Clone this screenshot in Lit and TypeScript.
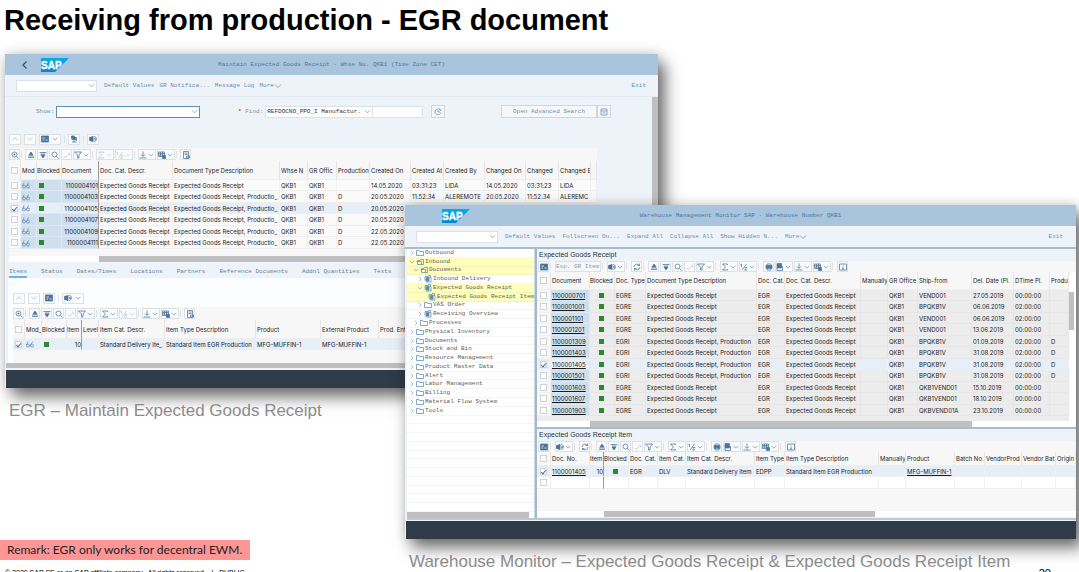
import { LitElement, html, svg, css, nothing, TemplateResult } from "lit";
import { customElement, property } from "lit/decorators.js";
import { classMap } from "lit/directives/class-map.js";
import { styleMap } from "lit/directives/style-map.js";

const glyphs: Record<string, unknown> = {
  chevron: svg`<path d="M2 5l6 6 6-6"/>`,
  next: svg`<path d="M5 2l6 6-6 6"/>`,
  back: svg`<path d="M11 1L4 8l7 7" stroke-width="2.4"/>`,
  up: svg`<path d="M3 11l5-6 5 6"/>`,
  down: svg`<path d="M3 5l5 6 5-6"/>`,
  form: svg`<path class="f" d="M1 2h14v12H1z"/><path stroke="#fff" d="M3 6h5M3 10h3M9 10h4"/>`,
  scan: svg`<path class="f" d="M3 2h6v5H3zM7 5h6v4H7z"/><path d="M8 9v5M4 14h9M3 9h3M11 11h3"/>`,
  receipt: svg`<path class="f" d="M1 5l7-2v10l-7-2z"/><path d="M9 4c4-3 6 2 6 4s-2 6-6 4M10 8h4M12 6v4"/>`,
  zoomin: svg`<circle cx="7" cy="7" r="5"/><path d="M11 11l4 4M5 7h4M7 5v4"/>`,
  asc: svg`<path class="f" d="M8 2l4 6H4z"/><path d="M2 10h12M2 13h12"/>`,
  desc: svg`<path d="M1 3h14M3 6h10"/><path class="f" d="M4 8h8l-4 6z"/>`,
  search: svg`<circle cx="7" cy="7" r="5"/><path d="M11 11l4 4"/>`,
  searchnext: svg`<path d="M2 10l3 3 5-6M12 3v4h3"/>`,
  funnel: svg`<path d="M1 2h14l-5 6v6H7V8z"/>`,
  sum: svg`<path d="M13 4V2H3l6 6-6 6h10v-2"/>`,
  subtotal: svg`<path d="M3 2v6M1 3l2-1M13 2L4 14M9 9h5l-5 5h5"/>`,
  download: svg`<path d="M8 1v9M4 7l4 4 4-4M1 14h14"/>`,
  layout: svg`<path d="M1 2h12v9H1zM1 5h12M5 2v9M9 2v9M1 8h12"/><path class="f" d="M9 9h6v6H9z"/>`,
  doc: svg`<path d="M3 1h10v14H3zM5 4h6M5 7h6M9 10h6v4H9z"/>`,
  refresh: svg`<path d="M2 8a6 6 0 0 1 11-3M14 8a6 6 0 0 1-11 3M13 1v4H9M3 15v-4h4"/>`,
  print: svg`<path d="M4 5V2h8v3M2 5h12v6H2zM4 9h8v5H4z"/><path class="f" d="M3 6h10v3H3z"/>`,
  view: svg`<path class="f" d="M2 1h9v9H2z"/><path d="M4 3h5M2 10v5h11V6"/>`,
  info: svg`<path d="M1 2h14v12H1zM8 7v5M8 4v1M6 12h4"/>`,
  clock: svg`<path d="M14 9a6 6 0 1 1-2-6M8 4v4h4M12 1v4h3"/>`,
  collapse: svg`<path d="M2 2h12v12H2zM2 6h12M5 10h6"/>`,
  glasses: svg`<circle cx="4" cy="11" r="3"/><circle cx="12" cy="11" r="3"/><path d="M7 11h2M1 11l3-8M9 11l4-8"/>`,
  folder: svg`<path d="M1 13V3h5l1 2h8v8z"/>`,
  open: svg`<path d="M3 13V5h5l1-2h6v10zM1 7h10v6"/>`,
  stack: svg`<path d="M4 14V5h10v9zM2 11V3h7V1h4v4"/><path class="f" d="M5 6h5v6H5z"/>`,
};

const icon = (name: string) =>
  html`<svg class="icon" viewBox="0 0 16 16" aria-hidden="true">${glyphs[name]}</svg>`;

type Tool = string;

/* "name" is a push button, "name+" opens a menu, "|" separates, a leading "-" disables */
const tool = (t: Tool) => {
  if (t === "|") return html`<span class="sep"></span>`;
  if (t.startsWith("=")) return html`<button class="word">${t.slice(1)}</button>`;
  const off = t.startsWith("-");
  const menu = t.endsWith("+");
  const name = t.replace(/[-+]/g, "");
  return html`<button class=${classMap({ tool: true, menu, off })} ?disabled=${off} aria-label=${name}>
    ${icon(name)}${menu ? html`<span class="drop">${icon("chevron")}</span>` : nothing}
  </button>`;
};

interface Col {
  t: string;
  w?: number;
  kind?: "check" | "mode" | "led" | "num" | "key" | "link";
  pin?: boolean;
  edge?: boolean;
}

const cell = (c: Col, v: string): unknown => {
  switch (c.kind) {
    case "check":
      return html`<input type="checkbox" aria-label="Select row" ?checked=${v === "x"} />`;
    case "mode":
      return v ? icon("glasses") : nothing;
    case "led":
      return v ? html`<i class="led"></i>` : nothing;
    case "key":
    case "link":
      return v ? html`<a href="#">${v}</a>` : nothing;
    default:
      return v;
  }
};

const grid = (cols: Col[], rows: string[][], name: string): TemplateResult => html`
  <table aria-label=${name}>
    <colgroup>
      ${cols.map((c) => html`<col style=${styleMap(c.w ? { width: `${c.w}px` } : {})} />`)}
    </colgroup>
    <thead>
      <tr>
        ${cols.map(
          (c) => html`<th class=${classMap({ edge: !!c.edge, [c.kind ?? "text"]: true })}>
            ${c.kind === "check" ? html`<input type="checkbox" aria-label="Select all" />` : c.t}
          </th>`
        )}
      </tr>
    </thead>
    <tbody>
      ${rows.map(
        (r) => html`<tr class=${classMap({ on: r[0] === "x" })}>
          ${cols.map(
            (c, i) => html`<td class=${classMap({ pin: !!c.pin, edge: !!c.edge, [c.kind ?? "text"]: true })}>
              ${cell(c, r[i] ?? "")}
            </td>`
          )}
        </tr>`
      )}
    </tbody>
  </table>
`;

const combo = (cls: string, label: string, value = "") => html`
  <span class="combo ${cls}">
    <select aria-label=${label} id=${cls}><option>${value}</option></select>
    ${icon("chevron")}
  </span>
`;

const EGR = "Expected Goods Receipt";
const PROD = "Expected Goods Receipt, Productio_";

const docCols: Col[] = [
  { t: "", w: 12, kind: "check" },
  { t: "Mod", w: 16, kind: "mode", pin: true },
  { t: "Blocked", w: 25, kind: "led", pin: true },
  { t: "Document", w: 37, kind: "num", pin: true, edge: true },
  { t: "Doc. Cat. Descr.", w: 74 },
  { t: "Document Type Description", w: 107 },
  { t: "Whse N", w: 28 },
  { t: "GR Offic", w: 29 },
  { t: "Production", w: 33 },
  { t: "Created On", w: 41 },
  { t: "Created At", w: 33 },
  { t: "Created By", w: 41 },
  { t: "Changed On", w: 41 },
  { t: "Changed", w: 33 },
  { t: "Changed E", w: 32 },
  { t: "" },
];

const docRows: string[][] = [
  ["1100004101", EGR, "", "14.05.2020", "03:31:23", "LIDA", "14.05.2020", "LIDA"],
  ["1100004103", PROD, "D", "20.05.2020", "11:52:34", "ALEREMOTE", "20.05.2020", "ALEREMC"],
  ["1100004105", PROD, "D", "20.05.2020", "", "", "", ""],
  ["1100004107", PROD, "D", "20.05.2020", "", "", "", ""],
  ["1100004109", PROD, "D", "22.05.2020", "", "", "", ""],
  ["1100004111", PROD, "D", "22.05.2020", "", "", "", ""],
].map(([doc, type, d, on, at, by, changed, changer], i) => [
  i === 2 ? "x" : "", "1", "1", doc, EGR, type, "QKB1", "QKB1", d, on, at, by, changed, at, changer,
]);

const itemCols: Col[] = [
  { t: "", w: 12, kind: "check" },
  { t: "Mod_", w: 17, kind: "mode" },
  { t: "Blocked", w: 25, kind: "led" },
  { t: "Item", w: 15, kind: "num", edge: true },
  { t: "Level", w: 17 },
  { t: "Item Cat. Descr.", w: 66 },
  { t: "Item Type Description", w: 91 },
  { t: "Product", w: 65 },
  { t: "External Product", w: 58 },
  { t: "Prod. Entry" },
];

const monCols: Col[] = [
  { t: "", w: 14, kind: "check" },
  { t: "Document", w: 39, kind: "key", pin: true },
  { t: "Blocked", w: 25, kind: "led" },
  { t: "Doc. Type", w: 31 },
  { t: "Document Type Description", w: 111 },
  { t: "Doc. Cat.", w: 28 },
  { t: "Doc. Cat. Descr.", w: 76 },
  { t: "Manually", w: 27 },
  { t: "GR Office", w: 30 },
  { t: "Ship-from", w: 54 },
  { t: "Del. Date (Pl.", w: 42 },
  { t: "DTime Pl.", w: 36 },
  { t: "Produ" },
];

const monRows: string[][] = [
  ["1100000701", "EGRE", "VEND001", "27.05.2019", "00:00:00"],
  ["1100001001", "EGRE", "BPQKB1V", "06.06.2019", "02:00:00"],
  ["1100001101", "EGRE", "VEND001", "06.06.2019", "02:00:00"],
  ["1100001201", "EGRE", "VEND001", "13.06.2019", "00:00:00"],
  ["1100001309", "EGRI", "BPQKB1V", "01.09.2019", "02:00:00"],
  ["1100001403", "EGRI", "BPQKB1V", "31.08.2019", "02:00:00"],
  ["1100001405", "EGRI", "BPQKB1V", "31.08.2019", "02:00:00"],
  ["1100001501", "EGRI", "BPQKB1V", "31.08.2019", "02:00:00"],
  ["1100001603", "EGRE", "QKB1VEND01", "15.10.2019", "00:00:00"],
  ["1100001607", "EGRE", "QKB1VEND01", "18.10.2019", "00:00:00"],
  ["1100001903", "EGRE", "QKBVEND01A", "23.10.2019", "00:00:00"],
].map(([doc, type, from, date, time]) => [
  doc === "1100001405" ? "x" : "", doc, "1", type,
  type === "EGRI" ? `${EGR}, Production` : EGR,
  "EGR", EGR, "", "QKB1", from, date, time, type === "EGRI" ? "D" : "",
]);

const monItemCols: Col[] = [
  { t: "", w: 14, kind: "check" },
  { t: "Doc. No.", w: 39, kind: "key" },
  { t: "Item", w: 14, kind: "num", edge: true },
  { t: "Blocked", w: 25, kind: "led" },
  { t: "Doc. Cat.", w: 29 },
  { t: "Item Cat.", w: 28 },
  { t: "Item Cat. Descr.", w: 69 },
  { t: "Item Type", w: 30 },
  { t: "Item Type Description", w: 94 },
  { t: "Manually", w: 27 },
  { t: "Product", w: 49, kind: "link" },
  { t: "Batch No.", w: 30 },
  { t: "VendorProd", w: 37 },
  { t: "Vendor Bat", w: 34 },
  { t: "Origin" },
];

/* [level, state, icon, label, highlighted] */
const tree: [number, string, string, string, boolean?][] = [
  [0, "next", "folder", "Outbound"],
  [0, "chevron", "open", "Inbound", true],
  [1, "chevron", "open", "Documents", true],
  [2, "next", "stack", "Inbound Delivery"],
  [2, "chevron", "stack", "Expected Goods Receipt", true],
  [3, "", "stack", "Expected Goods Receipt Item", true],
  [2, "next", "folder", "VAS Order"],
  [2, "next", "stack", "Receiving Overview"],
  [1, "next", "folder", "Processes"],
  ...[
    "Physical Inventory", "Documents", "Stock and Bin", "Resource Management",
    "Product Master Data", "Alert", "Labor Management", "Billing",
    "Material Flow System", "Tools",
  ].map((n): [number, string, string, string] => [0, "next", "folder", n]),
];

const shared = css`
  :host { display: block; }
  * { box-sizing: border-box; }
  .icon {
    width: 8px; height: 8px; display: block; flex: none;
    fill: none; stroke: currentColor; stroke-width: 1.5;
  }
  .icon .f { fill: currentColor; }
  button, select, input {
    font: inherit; color: inherit; margin: 0; padding: 0;
    border: 0; border-radius: 0; background: none;
  }
`;

@customElement("sap-shell")
export class SapShell extends LitElement {
  @property() heading = "";
  @property({ type: Boolean }) back = false;

  static styles = [
    shared,
    css`
      :host {
        background: #edf3f8;
        box-shadow: 7px 9px 15px rgba(0, 0, 0, 0.55), 0 0 12px rgba(0, 0, 0, 0.16);
        font: 6px/9px "Liberation Mono", monospace;
        color: #6d8fae;
      }
      header {
        display: grid; grid-template-columns: 66px 1fr 66px; align-items: center;
        height: 21px; background: #a9c5de; color: #4f7699;
      }
      .lead { display: flex; align-items: center; padding-left: 16px; gap: 12px; }
      .lead .icon { color: #2d5676; }
      .lead.solo { padding-left: 37px; }
      .logo { width: 28px; height: 14px; flex: none; display: block; }
      .logo text { font: bold 10px "Liberation Sans", sans-serif; fill: #fff; stroke: #fff; stroke-width: 0.4; }
      h2 { margin: 0; font: inherit; text-align: center; }
      footer { height: 18px; margin-left: 1px; background: #2f3c48; }
    `,
  ];

  render() {
    return html`
      <header>
        <div class=${classMap({ lead: true, solo: !this.back })}>
          ${this.back ? icon("back") : nothing}
          <svg class="logo" viewBox="0 0 28 14" role="img" aria-label="SAP">
            <defs>
              <linearGradient id="g" x2="0" y2="1">
                <stop offset="0" stop-color="#00aeea" /><stop offset="1" stop-color="#0a85cc" />
              </linearGradient>
            </defs>
            <path d="M0 0h28L14 14H0z" fill="url(#g)" />
            <text x="0" y="11">SAP</text>
          </svg>
        </div>
        <h2>${this.heading}</h2>
      </header>
      <slot></slot>
      <footer></footer>
    `;
  }
}

@customElement("app-root")
export class AppRoot extends LitElement {
  static styles = [
    shared,
    css`
      .slide {
        display: flex; flex-direction: column; height: 100vh; overflow: hidden;
        background: #fff; font-family: "Liberation Sans", Arial, sans-serif;
      }
      h1 { margin: 0; padding: 3px 4px 0; font-size: 29px; line-height: 34px; color: #000; }
      .canvas { position: relative; flex: 1; }
      figure { position: absolute; margin: 0; }
      .one { left: 5px; right: 421px; top: 17px; }
      .two { left: 405px; right: 3px; top: 168px; }
      figcaption { padding: 12px 4px 0; font-size: 17px; line-height: 22px; color: #8c8c8c; white-space: nowrap; }
      .remark {
        align-self: flex-start; margin: 0; padding: 0 8px 0 7px;
        background: #ff9696; font: 12px/20px Lato, Carlito, sans-serif; color: #222;
      }
      .foot {
        display: flex; justify-content: space-between; flex: none; height: 12px;
        padding: 9px 28px 0 5px; font-size: 7px; line-height: 8px; color: #000; white-space: pre;
      }
      .foot .page { font-size: 11px; line-height: 8px; }

      /* function bar under the shell header */
      .menu-bar { display: flex; align-items: center; gap: 5px; height: 22px; padding: 0 12px 0 11px; border-bottom: 1px solid #e3eaf1; }
      .two .menu-bar { gap: 7px; border-bottom: 2px solid #a9bccd; padding-right: 13px; height: 23px; }
      .menu-bar button { white-space: nowrap; display: flex; align-items: center; }
      .menu-bar .exit { margin-left: auto; }

      .combo { display: grid; height: 12px; background: #fff; border: 1px solid #d9e2ea; align-items: center; flex: none; color: #333; }
      .combo > * { grid-area: 1 / 1; }
      .combo select { appearance: none; width: 100%; height: 10px; padding: 0 8px 0 1px; outline: none; }
      .combo .icon { justify-self: end; margin-right: 1px; pointer-events: none; color: #6489ab; width: 7px; height: 7px; }
      .cmd { width: 81px; margin-right: 2px; }
      .cmd2 { width: 82px; }
      .show { width: 144px; border-color: #5f8cb4; }
      .find { width: 108px; }

      .query { display: flex; align-items: center; padding: 8px 41px 0 31px; height: 21px; }
      .query label { margin-right: 2px; color: #8295a6; white-space: nowrap; }
      .query .req { margin-left: 38px; }
      .query .req b { color: #d33; }
      .query .value { width: 50px; height: 12px; background: #fff; border: 1px solid #d9e2ea; border-left: 0; }
      .query .box { display: grid; place-items: center; width: 14px; height: 13px; border: 1px solid #cfd6dc; background: #f6f7f8; white-space: nowrap; }
      .query .clock { margin-left: 8px; }
      .query .adv { width: 96px; margin-left: auto; }

      /* icon toolbars */
      .bar { display: flex; align-items: center; gap: 1px; height: 13px; background: #f7f7f7; }
      .bar .sep { width: 3px; height: 7px; border-left: 1px solid #dfe3e7; }
      .two .bar .sep { width: 4px; }
      .tool { display: grid; grid-auto-flow: column; place-items: center; width: 11px; height: 11px; border: 1px solid #dde1e5; color: #4a7399; background: #fafbfc; }
      .tool.menu { width: 18px; grid-template-columns: 8px 8px; }
      .tool .drop .icon { width: 6px; height: 6px; }
      .tool.off { color: #b4c5d4; }
      .bar .word { width: 46px; height: 11px; border: 1px solid #dde1e5; text-align: left; white-space: nowrap; color: #7c9ab5; }
      .actions { display: flex; align-items: center; gap: 3px; height: 12px; }
      .actions .sep { width: 1px; height: 7px; background: #dce4eb; }
      .actions .tool { width: 12px; }
      .actions .tool.menu { width: 22px; grid-template-columns: 10px 10px; }

      /* data grids */
      table { width: 100%; table-layout: fixed; border-collapse: separate; border-spacing: 0; font: 6px/9px Inter, "Liberation Sans", sans-serif; color: #1c1c1c; }
      th, td { padding: 0 0 0 1px; height: 11px; font-weight: normal; text-align: left; white-space: nowrap; overflow: hidden; vertical-align: middle; border-bottom: 1px solid #efefef; border-right: 1px solid #f0f0f0; }
      th { height: 19px; background: #f7f7f7; border-right-color: #e6e6e6; }
      tbody tr:nth-child(even) td { height: 12px; }
      th.led, th.num { padding: 0; }
      .check { padding: 0; background: #f7f7f7; }
      .check input { appearance: none; display: block; width: 7px; height: 7px; margin: 0 auto; border: 1px solid #cdd3d9; background: #fff; }
      .check input:checked::after { content: ""; display: block; width: 2px; height: 4px; margin-left: 1px; border: solid #3f729b; border-width: 0 1px 1px 0; transform: rotate(40deg); }
      td.num { text-align: right; padding: 0; }
      td.mode { color: #5b8ab5; }
      td .led { display: block; width: 5px; height: 5px; background: #2c8a2c; margin-left: 1px; }
      .two td .led { margin-left: 8px; }
      td a { color: inherit; }
      td.pin { background: #cfdfee; border-color: #dde8f2; }
      .edge, td.pin.edge { border-right-color: #9a9a9a; }
      .one tbody td:not(.pin) { background: #fafafa; }
      .on td, .on td.pin, .on td.check, .one tbody .on td { background: #e6eef7; }
      .one tbody .on td:not(.pin) { background: #e6eef7; }
      .two .main th { height: 18px; }
      .two .main tbody tr:not(.on) td:not(.pin):not(.check) { background: #ececec; border-color: #e6e6e6; }
      .two .items tbody tr:not(.on) td { background: #fff; }
      .two .items th { height: 14px; }

      .track { display: flex; height: 6px; background: #fff; }
      .thumb { background: #bfbfbf; }

      .stage { display: grid; grid-template-columns: 1fr 6px; }
      .rail { background: #bfbfbf; }
      .docs { margin: 0 55px 0 4px; background: #f7f7f7; }
      .stage .actions.top { margin: 15px 4px 3px; }
      .pad { height: 7px; }
      .docs .thumb { margin-left: 90px; flex: 1; }

      .tabs { display: flex; gap: 14px; height: 16px; padding: 0 4px; align-items: stretch; }
      .tabs a { color: #6f8191; text-decoration: none; line-height: 19px; white-space: nowrap; }
      .tabs .sel { color: #3f90cc; border-bottom: 2px solid #6db3e4; }
      .sub { background: #fbfdff; padding: 14px 0 0 5px; height: 85px; margin-left: 3px; }
      .sub-body { background: #f7f7f7; height: 56px; margin-top: 3px; }
      .sub-scroll { height: 5px; margin: 0 0 2px 1px; background: #bfbfbf; }

      /* monitor */
      .monitor { display: grid; grid-template-columns: 128px 1fr; margin-left: 2px; border-bottom: 2px solid #b9c9d8; margin-bottom: 1px; }
      .tree { background: #fff; border-right: 1px solid #ccd8e2; color: #5c5c5c; }
      .tree ul { margin: 0; padding: 0; list-style: none; display: grid; grid-template-rows: repeat(30, 1fr); height: 263px; }
      .tree li { display: flex; align-items: center; gap: 1px; min-height: 0; padding-left: 2px; border-bottom: 1px solid #f3f4f5; white-space: nowrap; line-height: 8px; }
      .tree li.hit { background: #ffffbd; border-color: #f4f4b4; }
      .tree .icon { color: #5d88ad; }
      .tree .twist { width: 6px; }
      .tree .twist .icon { width: 6px; height: 6px; }
      .l1 { margin-left: 4px; }
      .l2 { margin-left: 8px; }
      .l3 { margin-left: 12px; }
      .tree .thumb { width: 122px; }
      .lists { border-left: 2px solid #a3b8cb; min-width: 0; }
      h3 { margin: 0; padding-left: 2px; font: 7px/12px "Liberation Sans", Arial, sans-serif; color: #333; background: #edf3f8; }
      .lists .bar { padding-left: 1px; height: 11px; }
      .scroller { display: grid; grid-template-columns: 1fr 7px; background: #ececec; }
      .vtrack { background: #fff; padding-top: 20px; }
      .vtrack .thumb { height: 38px; width: 5px; }
      .h1 .thumb { width: 382px; margin-left: 53px; }
      .h2 .thumb { width: 271px; margin-left: 67px; }
      .lists .main { border-bottom: 2px solid #a9bccd; }
      .rest { height: 5px; background: #ececec; }
      .void { height: 22px; background: #f7f7f7; }
    `,
  ];

  private bar(tools: Tool[]) {
    return html`<div class="bar">${tools.map(tool)}</div>`;
  }

  private receipts() {
    return html`
      <sap-shell back heading="Maintain Expected Goods Receipt - Whse No. QKB1 (Time Zone CET)">
        <nav class="menu-bar">
          ${combo("cmd", "Command")}
          <button>Default Values</button><button>GR Notifica...</button><button>Message Log</button>
          <button>More${icon("chevron")}</button><button class="exit">Exit</button>
        </nav>
        <div class="stage">
          <div>
            <div class="query">
              <label for="show">Show:</label>${combo("show", "Show")}
              <label class="req" for="find"><b>*</b> Find:</label>
              ${combo("find", "Find", "REFDOCNO_PPO_I Manufactur.")}
              <input class="value" aria-label="Find value" />
              <button class="box clock" aria-label="Search">${icon("clock")}</button>
              <button class="box adv">Open Advanced Search</button>
              <button class="box" aria-label="Collapse">${icon("collapse")}</button>
            </div>
            <div class="actions top">
              ${["-up", "-down", "form+", "|", "scan", "|", "receipt"].map(tool)}
            </div>
            <div class="docs">
              ${this.bar(["zoomin", "|", "asc", "desc", "search", "-searchnext", "funnel+", "|", "-sum+", "-subtotal+", "|", "download+", "layout+", "|", "doc"])}
              ${grid(docCols, docRows, "Documents")}
              <div class="pad"></div>
              <div class="track"><div class="thumb"></div></div>
            </div>
            <nav class="tabs">
              ${["Items", "Status", "Dates/Times", "Locations", "Partners", "Reference Documents", "Addnl Quantities", "Texts"].map(
                (t, i) => html`<a href="#" class=${i ? "" : "sel"}>${t}</a>`
              )}
            </nav>
            <div class="sub">
              <div class="actions">${["-up", "-down", "form", "|", "receipt+"].map(tool)}</div>
              <div class="sub-body">
                ${this.bar(["zoomin", "|", "asc", "desc", "search", "-searchnext", "funnel+", "|", "sum+", "-subtotal+", "|", "download+", "layout+", "|", "doc"])}
                ${grid(
                  itemCols,
                  [["x", "1", "1", "10", "", "Standard Delivery Ite_", "Standard Item EGR Production", "MFG-MUFFIN-1", "MFG-MUFFIN-1", ""]],
                  "Items"
                )}
              </div>
            </div>
          </div>
          <div class="rail"></div>
        </div>
        <div class="sub-scroll"></div>
      </sap-shell>
    `;
  }

  private monitor() {
    const tail = ["|", "refresh", "|", "asc", "desc", "search", "-searchnext", "funnel+", "|", "sum+", "subtotal+", "|", "print", "view+", "download+", "layout+", "|", "info"];
    const rows = Array.from({ length: 30 }, (_, i) => tree[i]);
    return html`
      <sap-shell heading="Warehouse Management Monitor SAP - Warehouse Number QKB1">
        <nav class="menu-bar">
          ${combo("cmd2", "Command")}
          <button>Default Values</button><button>Fullscreen On...</button><button>Expand All</button>
          <button>Collapse All</button><button>Show Hidden N...</button>
          <button>More${icon("chevron")}</button><button class="exit">Exit</button>
        </nav>
        <div class="monitor">
          <nav class="tree">
            <ul>
              ${rows.map((n) =>
                n
                  ? html`<li class=${n[4] ? "hit" : ""}>
                      <span class="twist l${n[0]}">${n[1] ? icon(n[1]) : nothing}</span>${icon(n[2])}<span>${n[3]}</span>
                    </li>`
                  : html`<li></li>`
              )}
            </ul>
            <div class="track"><div class="thumb"></div></div>
          </nav>
          <div class="lists">
            <section class="main">
              <h3>Expected Goods Receipt</h3>
              ${this.bar(["form", "|", "=Exp. GR Item", "|", "receipt+", ...tail])}
              <div class="scroller">
                <div>${grid(monCols, monRows, "Expected Goods Receipt")}<div class="rest"></div></div>
                <div class="vtrack"><div class="thumb"></div></div>
              </div>
              <div class="track h1"><div class="thumb"></div></div>
            </section>
            <section class="items">
              <h3>Expected Goods Receipt Item</h3>
              ${this.bar(["form", "|", "receipt+", ...tail])}
              ${grid(
                monItemCols,
                [
                  ["x", "1100001405", "10", "1", "EGR", "DLV", "Standard Delivery Item", "EDPP", "Standard Item EGR Production", "", "MFG-MUFFIN-1", "", "", "", ""],
                  [""],
                ],
                "Expected Goods Receipt Item"
              )}
              <div class="void"></div>
              <div class="track h2"><div class="thumb"></div></div>
            </section>
          </div>
        </div>
      </sap-shell>
    `;
  }

  render() {
    return html`
      <main class="slide">
        <h1>Receiving from production - EGR document</h1>
        <div class="canvas">
          <figure class="one">
            ${this.receipts()}
            <figcaption>EGR – Maintain Expected Goods Receipt</figcaption>
          </figure>
          <figure class="two">
            ${this.monitor()}
            <figcaption>Warehouse Monitor – Expected Goods Receipt &amp; Expected Goods Receipt Item</figcaption>
          </figure>
        </div>
        <p class="remark">Remark: EGR only works for decentral EWM.</p>
        <div class="foot">
          <span>© 2020 SAP SE or an SAP affiliate company.  All rights reserved.   ǀ   PUBLIC</span>
          <span class="page">20</span>
        </div>
      </main>
    `;
  }
}
